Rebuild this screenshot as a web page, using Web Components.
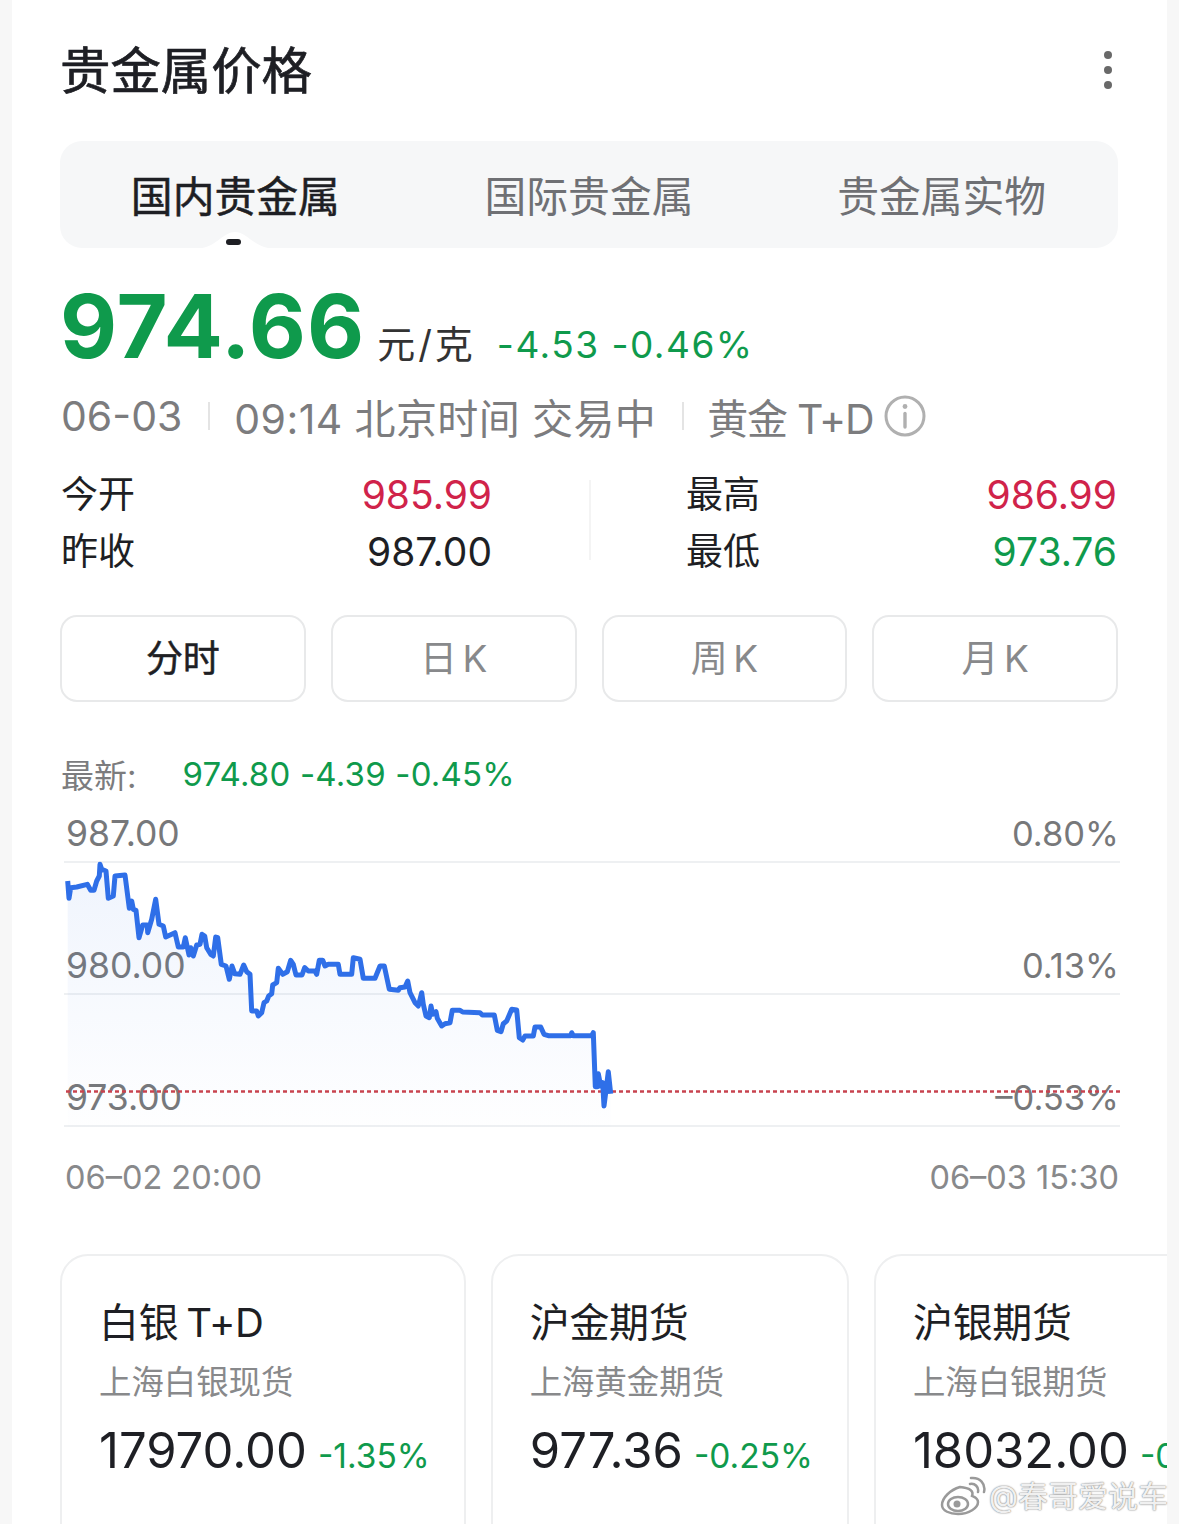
<!DOCTYPE html>
<html lang="zh">
<head>
<meta charset="utf-8">
<title>贵金属价格</title>
<style>
  html, body { margin: 0; height: 1524px; overflow: hidden; background: #f7f7f7; }
  body { font-family: Inter, "Noto Sans CJK SC", sans-serif; color: #1e1f24; position: relative; }
  .panel { display: block; margin: 0 12px; height: 1524px; background: #fff; overflow: hidden; }
</style>
</head>
<body>
<div class="panel">
  <metal-header>贵金属价格</metal-header>
  <metal-tabs></metal-tabs>
  <quote-head></quote-head>
  <stat-grid></stat-grid>
  <period-tabs></period-tabs>
  <trend-chart></trend-chart>
  <card-row>
    <metal-card name="白银 T+D" sub="上海白银现货" price="17970.00" pct="-1.35%"></metal-card>
    <metal-card name="沪金期货" sub="上海黄金期货" price="977.36" pct="-0.25%"></metal-card>
    <metal-card name="沪银期货" sub="上海白银期货" price="18032.00" pct="-0.89%"></metal-card>
  </card-row>
</div>
<water-mark>@春哥爱说车</water-mark>

<script>
class MetalHeader extends HTMLElement {
  constructor() {
    super();
    this.attachShadow({ mode: 'open' });
    this.shadowRoot.innerHTML = `
    <style>
      :host { display: flex; height: 141px; align-items: center; justify-content: space-between; padding: 0 55px 0 48px; }
      .title { font-size: 50.4px; line-height: 60px; font-weight: 400; -webkit-text-stroke: .7px #1e1f24; color: #1e1f24; }
      .menu { display: flex; flex-direction: column; gap: 7px; margin-top: -1px; }
      .menu i { display: block; width: 8px; height: 8px; border-radius: 50%; background: #696969; }
    </style>
    <div class="title"><slot></slot></div>
    <div class="menu"><i></i><i></i><i></i></div>`;
  }
}
customElements.define('metal-header', MetalHeader);

class MetalTabs extends HTMLElement {
  constructor() {
    super();
    this.attachShadow({ mode: 'open' });
    this.shadowRoot.innerHTML = `
    <style>
      :host { display: grid; grid-template-columns: repeat(3, 1fr); height: 107px; margin: 0 49px 0 48px; background: #f6f7f8; border-radius: 22px; overflow: hidden; }
      .tab { position: relative; display: flex; justify-content: center; padding-top: 31px; font-size: 41.8px; line-height: 50px; color: #6f7074; }
      .on { color: #1e1f24; -webkit-text-stroke: .5px #1e1f24; transform: translateX(-1px); }
      svg { position: absolute; left: 50%; bottom: 0; width: 66px; height: 17px; margin-left: -33px; }
      .dot { position: absolute; left: 50%; bottom: 3px; width: 15px; height: 6px; margin-left: -9px; border-radius: 3px; background: #1e1f24; }
    </style>
    <div class="tab on">国内贵金属
      <svg viewBox="0 0 66 17"><path d="M0 17 C14 15 22 1 33 1 C44 1 52 15 66 17Z" fill="#fff"/></svg>
      <span class="dot"></span>
    </div>
    <div class="tab">国际贵金属</div>
    <div class="tab">贵金属实物</div>`;
  }
}
customElements.define('metal-tabs', MetalTabs);

class QuoteHead extends HTMLElement {
  constructor() {
    super();
    this.attachShadow({ mode: 'open' });
    this.shadowRoot.innerHTML = `
    <style>
      :host { display: block; padding: 0 49px; }
      .main { display: flex; align-items: baseline; height: 121px; padding-top: 11px; margin-left: -1px; color: #0f9a4c; }
      .price { font-size: 88px; line-height: 134px; font-weight: 700; letter-spacing: 1px; }
      .unit { font-size: 38px; color: #333; margin-left: 12px; letter-spacing: 3px; }
      .chg { font-size: 37px; margin-left: 21px; letter-spacing: 1.5px; }
      .meta { display: flex; align-items: center; height: 72px; font-size: 41px; color: #7c7c7e; }
      .sep { width: 2px; height: 28px; background: #e4e4e4; margin: 0 24px 0 26px; }
      .when { letter-spacing: .4px; }
      .kind { letter-spacing: -1.3px; margin-left: -1px; }
      svg { width: 42px; height: 42px; margin-left: 11px; }
    </style>
    <div class="main">
      <span class="price">974.66</span>
      <span class="unit">元/克</span>
      <span class="chg">-4.53 -0.46%</span>
    </div>
    <div class="meta">
      <span>06-03</span><span class="sep"></span>
      <span class="when">09:14 北京时间 交易中</span><span class="sep"></span>
      <span class="kind">黄金 T+D</span>
      <svg viewBox="0 0 42 42">
        <circle cx="21" cy="21" r="19" fill="none" stroke="#b0b0b0" stroke-width="3"/>
        <circle cx="21" cy="11.5" r="2.4" fill="#b0b0b0"/>
        <path d="M21 18.5V32" stroke="#b0b0b0" stroke-width="3.4" stroke-linecap="round"/>
      </svg>
    </div>`;
  }
}
customElements.define('quote-head', QuoteHead);

class StatGrid extends HTMLElement {
  constructor() {
    super();
    this.attachShadow({ mode: 'open' });
    this.shadowRoot.innerHTML = `
    <style>
      :host { display: grid; grid-template-columns: 431px 431px; justify-content: space-between; position: relative; margin-top: 14px; padding: 0 50px 0 49px; font-size: 37px; }
      .row { display: flex; justify-content: space-between; height: 57px; line-height: 57px; color: #1e1f24; }
      .row b { font-weight: 400; font-size: 39px; }
      .red { color: #d0234a; }
      .green { color: #0f9a4c; }
      .rule { position: absolute; left: 577px; top: 14px; width: 2px; height: 80px; background: #f4f4f4; }
    </style>
    <div class="row"><span>今开</span><b class="red">985.99</b></div>
    <div class="row"><span>最高</span><b class="red">986.99</b></div>
    <div class="row"><span>昨收</span><b>987.00</b></div>
    <div class="row"><span>最低</span><b class="green">973.76</b></div>
    <div class="rule"></div>`;
  }
}
customElements.define('stat-grid', StatGrid);

class PeriodTabs extends HTMLElement {
  constructor() {
    super();
    this.attachShadow({ mode: 'open' });
    this.shadowRoot.innerHTML = `
    <style>
      :host { display: grid; grid-template-columns: repeat(4, 1fr); gap: 25px; margin: 35px 49px 0 48px; }
      div { display: flex; align-items: center; justify-content: center; box-sizing: border-box; height: 87px; padding-bottom: 5px; border: 2px solid #e8e9ea; border-radius: 17px; font-size: 37px; word-spacing: -5px; color: #88898b; }
      .on { color: #1e1f24; -webkit-text-stroke: .5px #1e1f24; }
    </style>
    <div class="on">分时</div><div>日 K</div><div>周 K</div><div>月 K</div>`;
  }
}
customElements.define('period-tabs', PeriodTabs);

// points read off the reference, page coordinates
const LEFT_PTS = [[203,180],[207,232],[212,200],[230,198],[262,190],[272,208],[282,208],[290,180],[298,165],[300,130],[305,145],[318,150],[325,232],[340,225],[345,165],[375,162],[388,262],[395,240],[400,265],[408,268],[417,350],[428,312],[442,312],[443,335],[455,295],[467,235],[477,310],[490,315],[497,348],[525,335],[535,378],[550,378],[556,350],[567,402],[572,380],[580,405],[590,372],[600,370],[606,340],[614,345],[620,380],[632,400],[640,405],[647,348],[653,350],[664,430],[678,435],[688,475],[696,435],[704,458],[720,460],[731,432],[740,452],[750,460],[755,570],[770,570],[775,585],[785,575],[792,545],[800,540],[806,525],[815,518],[818,492],[830,485],[835,442],[848,460],[862,452],[872,418],[880,430],[888,462],[906,462],[914,440],[925,450],[945,450],[950,460],[958,418],[968,418],[975,435],[985,430],[1015,430]]
  .map(p => [p[0] / 3, 820 + p[1] / 3]);
const RIGHT_PTS = [[0,100],[35,100],[40,50],[60,55],[70,112],[105,112],[120,75],[133,75],[148,145],[175,148],[180,140],[195,138],[203,120],[210,155],[225,185],[235,195],[245,155],[250,190],[258,225],[268,230],[273,195],[278,220],[288,212],[292,232],[305,255],[315,248],[330,245],[337,208],[360,208],[368,213],[420,215],[427,222],[463,222],[472,268],[483,272],[490,248],[500,240],[515,205],[530,207],[538,290],[548,297],[555,285],[580,285],[585,258],[602,258],[612,280],[625,284],[692,284],[695,275],[700,284],[755,284],[760,275],[766,437],[772,437],[775,398],[782,435],[788,425],[792,495],[797,455],[805,392],[812,458]]
  .map(p => [340 + p[0] / 3, 940 + p[1] / 3]);

class TrendChart extends HTMLElement {
  constructor() {
    super();
    this.attachShadow({ mode: 'open' });
    const pts = LEFT_PTS.concat(RIGHT_PTS);
    const line = pts.map(p => p[0].toFixed(1) + ',' + p[1].toFixed(1)).join(' ');
    const last = pts[pts.length - 1];
    const area = line + ' ' + last[0].toFixed(1) + ',1126 ' + pts[0][0].toFixed(1) + ',1126';
    this.shadowRoot.innerHTML = `
    <style>
      :host { display: block; margin: 0 47px 0 52px; }
      .latest { display: flex; height: 74px; margin: 35px 0 0 -3px; align-items: center; font-size: 33px; color: #7c7c7e; }
      .latest b { font-weight: 400; margin-left: 46px; letter-spacing: .2px; color: #0f9a4c; }
      .plot { position: relative; }
      .band { display: flex; align-items: flex-end; justify-content: space-between; box-sizing: border-box; height: 132px; padding: 0 1px 9px 2px; border-bottom: 2px solid #eef0f2; font-size: 35.5px; line-height: 36px; color: #77787a; }
      .band span + span { font-size: 34.5px; }
      .band.first { height: 52px; }
      svg { position: absolute; left: 0; top: 0; width: 1056px; height: 316px; overflow: visible; }
      .times { display: flex; justify-content: space-between; padding: 31px 1px 0 1px; font-size: 32.5px; line-height: 40px; color: #88898b; }
    </style>
    <div class="latest"><span>最新:</span><b>974.80 -4.39 -0.45%</b></div>
    <div class="plot">
      <div class="band first"><span>987.00</span><span>0.80%</span></div>
      <div class="band"><span>980.00</span><span>0.13%</span></div>
      <div class="band"><span>973.00</span><span>–0.53%</span></div>
      <svg viewBox="64 810 1056 316">
        <defs>
          <linearGradient id="fade" x1="0" y1="0" x2="0" y2="1">
            <stop offset="0" stop-color="#3d78e6" stop-opacity=".08"/>
            <stop offset="1" stop-color="#3d78e6" stop-opacity=".005"/>
          </linearGradient>
        </defs>
        <polygon points="${area}" fill="url(#fade)"/>
        <path d="M66 1090.5H1120" stroke="#c8434f" stroke-width="2.5" stroke-dasharray="4 3"/>
        <polyline points="${line}" fill="none" stroke="#2f6fe8" stroke-width="5" stroke-linejoin="round"/>
      </svg>
    </div>
    <div class="times"><span>06–02 20:00</span><span>06–03 15:30</span></div>`;
  }
}
customElements.define('trend-chart', TrendChart);

class CardRow extends HTMLElement {
  constructor() {
    super();
    this.attachShadow({ mode: 'open' });
    this.shadowRoot.innerHTML = `
    <style>
      :host { display: flex; gap: 24.5px; margin: 56px 0 0 48px; }
    </style>
    <slot></slot>`;
  }
}
customElements.define('card-row', CardRow);

class MetalCard extends HTMLElement {
  constructor() {
    super();
    this.attachShadow({ mode: 'open' });
  }
  static get observedAttributes() {
    return ['name', 'sub', 'price', 'pct'];
  }
  connectedCallback() {
    this.shadowRoot.innerHTML = `
    <style>
      :host { display: block; flex: none; box-sizing: border-box; height: 300px; padding: 40px 34.5px 0 37px; border: 2px solid #eeeff0; border-radius: 28px; }
      .name { font-size: 40px; line-height: 54px; color: #1e1f24; word-spacing: -3px; letter-spacing: -0.3px; }
      .sub { font-size: 32.4px; line-height: 46px; margin-top: 10px; color: #88898b; white-space: nowrap; }
      .val { display: flex; align-items: baseline; margin-top: 13px; white-space: nowrap; }
      .price { font-size: 49px; line-height: 64px; color: #1e1f24; }
      .pct { font-size: 33.5px; margin-left: 11px; color: #0f9a4c; }
    </style>
    <div class="name">${this.getAttribute('name')}</div>
    <div class="sub">${this.getAttribute('sub')}</div>
    <div class="val"><span class="price">${this.getAttribute('price')}</span><span class="pct">${this.getAttribute('pct')}</span></div>`;
  }
}
customElements.define('metal-card', MetalCard);

class WaterMark extends HTMLElement {
  constructor() {
    super();
    this.attachShadow({ mode: 'open' });
    this.shadowRoot.innerHTML = `
    <style>
      :host { position: absolute; right: 11px; top: 1476px; display: flex; align-items: center; gap: 3px; font-size: 30px; line-height: 40px; color: rgba(255,255,255,.9); text-shadow: 0 0 2px #8a8a8a, 0 0 1px #8a8a8a; }
      svg { width: 46px; height: 40px; }
    </style>
    <svg viewBox="0 0 46 40" fill="none" stroke="#9a9a9a" stroke-width="2.5">
      <path d="M20 11C10 14 2 22 2 29c0 6 8 9 16 9 11 0 20-6 20-12 0-4-4-5-6-6 2-5-2-8-12-9z" fill="#fff"/>
      <ellipse cx="18" cy="28" rx="10" ry="7" fill="#fff"/>
      <circle cx="17" cy="28" r="3.5" fill="#9a9a9a" stroke="none"/>
      <path d="M30 8c5-1 9 3 8 8M31 2c9-1 15 6 13 14" stroke-linecap="round"/>
    </svg>
    <slot></slot>`;
  }
}
customElements.define('water-mark', WaterMark);
</script>
</body>
</html>
